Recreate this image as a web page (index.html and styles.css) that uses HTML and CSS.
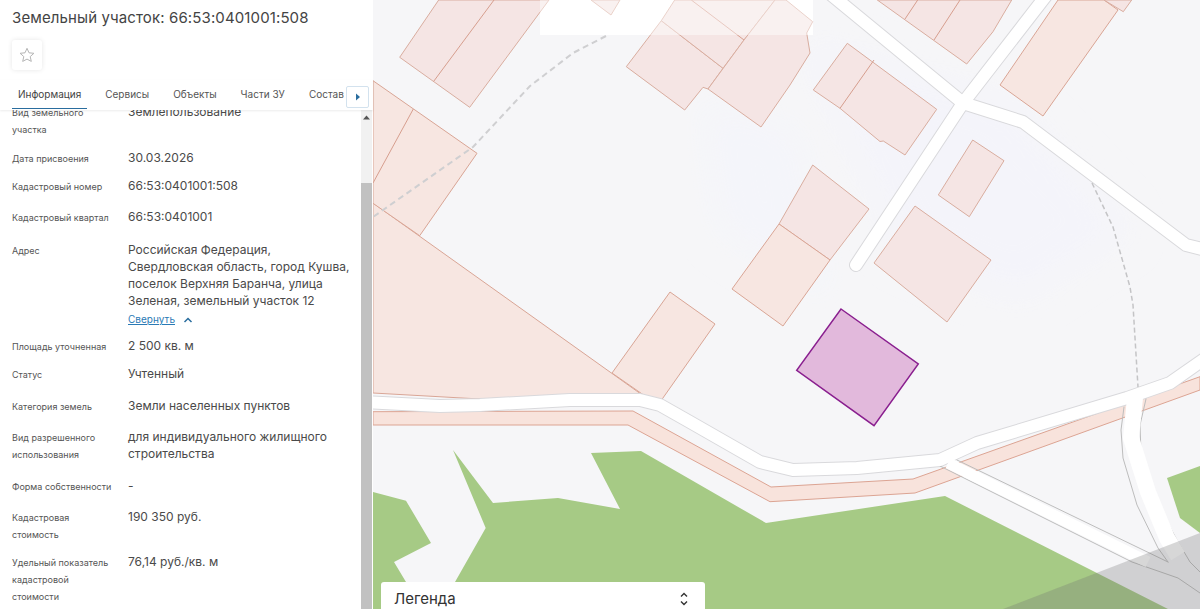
FILE: index.html
```html
<!DOCTYPE html>
<html lang="ru">
<head>
    <meta charset="UTF-8">
    <meta name="viewport" content="width=device-width, initial-scale=1.0">
    <title>Земельный участок</title>
    <link rel="stylesheet" href="styles.css">
</head>
<body>
    <div class="page">
        <aside class="panel">
            <h1 class="title">Земельный участок: 66:53:0401001:508</h1>
            <button class="star-btn" aria-label="Избранное">
                <svg width="16" height="16" viewBox="0 0 16 16">
                    <path d="M8 1.3l2 4.5 4.9.5-3.7 3.3 1.1 4.8L8 12.1l-4.3 2.3 1.1-4.8L1.100 6.300l4.900-.5z" fill="none" stroke="#b5b5b5" stroke-width="1"/>
                </svg>
            </button>
            <nav class="tabs">
                <a class="tab active">Информация</a>
                <a class="tab">Сервисы</a>
                <a class="tab">Объекты</a>
                <a class="tab">Части ЗУ</a>
                <a class="tab">Состав</a>
                <button class="tab-next" aria-label="Далее">
                    <svg width="6" height="8" viewBox="0 0 6 8"><path d="M1 0.500l4 3.500-4 3.500z" fill="#2a6d9e"/></svg>
                </button>
            </nav>
            <div class="content">
                <div class="info">
                    <div class="row gap-m">
                        <div class="label">Вид земельного участка</div>
                        <div class="value">Землепользование</div>
                    </div>
                    <div class="row gap-s">
                        <div class="label">Дата присвоения</div>
                        <div class="value">30.03.2026</div>
                    </div>
                    <div class="row gap-l">
                        <div class="label">Кадастровый номер</div>
                        <div class="value">66:53:0401001:508</div>
                    </div>
                    <div class="row gap-xxl">
                        <div class="label">Кадастровый квартал</div>
                        <div class="value">66:53:0401001</div>
                    </div>
                    <div class="row gap-xs">
                        <div class="label">Адрес</div>
                        <div class="value">
                            Российская Федерация, Свердловская область, город Кушва, поселок Верхняя Баранча, улица Зеленая, земельный участок 12
                            <div class="collapse">
                                <a class="collapse-link">Свернуть</a>
                                <svg width="10" height="6" viewBox="0 0 10 6"><path d="M1.500 5L5 1.500 8.500 5" fill="none" stroke="#2a6d9e" stroke-width="1.500"/></svg>
                            </div>
                        </div>
                    </div>
                    <div class="row gap-s">
                        <div class="label">Площадь уточненная</div>
                        <div class="value">2 500 кв. м</div>
                    </div>
                    <div class="row gap-xl">
                        <div class="label">Статус</div>
                        <div class="value">Учтенный</div>
                    </div>
                    <div class="row gap-l">
                        <div class="label">Категория земель</div>
                        <div class="value">Земли населенных пунктов</div>
                    </div>
                    <div class="row gap-xl">
                        <div class="label">Вид разрешенного использования</div>
                        <div class="value">для индивидуального жилищного строительства</div>
                    </div>
                    <div class="row gap-l">
                        <div class="label">Форма собственности</div>
                        <div class="value">-</div>
                    </div>
                    <div class="row gap-s">
                        <div class="label">Кадастровая стоимость</div>
                        <div class="value">190 350 руб.</div>
                    </div>
                    <div class="row">
                        <div class="label">Удельный показатель кадастровой стоимости</div>
                        <div class="value">76,14 руб./кв. м</div>
                    </div>
                </div>
                <div class="scrollbar">
                    <svg class="scroll-up" width="7" height="5" viewBox="0 0 7 5"><path d="M3.500 0.500L7 4.500H0z" fill="#555"/></svg>
                    <div class="scroll-thumb"></div>
                </div>
            </div>
        </aside>
        <main class="map">
            <svg class="map-svg" viewBox="373 0 827 609" width="827" height="609">
                <defs>
                    <filter id="soft"><feGaussianBlur stdDeviation="18"/></filter>
                </defs>
                <rect x="373" y="0" width="827" height="609" fill="#f6f6f8"/>
                <path d="M800 40L1010 100 1130 230 1020 300 900 250z" fill="#f4f4fa" filter="url(#soft)"/>
                <path d="M700 100L800 130 830 300 720 230z" fill="#f4f5fa" filter="url(#soft)"/>
                <!-- unloaded tile at the top -->
                <rect x="540" y="0" width="273" height="35" fill="#fff"/>

                <!-- green areas -->
                <g fill="#a6ca85">
                    <path d="M453 450L493 503 558 498 620 509 591 453 641 451 766 523 945 496 1168 609H440L455 582 485.700 528z"/>
                    <path d="M373 492L406 500.700 431 543 394 562 406 582 420 609H373z"/>
                    <path d="M1167 478L1200 466V533L1180 518z"/>
                </g>

                <!-- road strip under the main road -->
                <path class="parcel-strip" d="M373 411.700L633 411 771 487 913 479 1200 376.700V390L915 493 770 501.700 628 425H373z"/>

                <!-- big land parcels on the left -->
                <path class="parcel-warm" d="M373 203L646 397.700 570 395 480 399 373 393z"/>
                <path class="parcel-warm" d="M373 80.700L477 153.300 419.700 235.700 373 203.300z"/>
                <path class="divider" d="M413.300 109L373 183"/>
                <path class="parcel-warm" d="M670 292L715 324 658 405 612 373z"/>
                <path class="parcel" d="M438.700 0L399.700 57.300 469.700 107.300 549 0z"/>
                <path class="divider" d="M494 0L433.700 81.300"/>
                <path class="parcel" d="M591 0L611 15 620 0z"/>

                <!-- parcels by the crossing -->
                <path class="parcel" d="M626.300 66.700L661.300 20.700 723 68.300 708 89 703 87.300 684.700 110z"/>
                <path class="parcel" d="M661.300 20.700L674.700 0H775L744 40 723 68.300z"/>
                <path class="divider" d="M691.300 0L744 40"/>
                <path class="parcel" d="M744 40L775 0H786L812.700 21.700 806.700 33 810 53 790 85 761 127 708 89z"/>
                <path class="parcel" d="M813.300 90L847.300 43.300 936.700 109.300 905 155 883.300 141 880 141.500 840 108.300z"/>
                <path class="divider" d="M874 60L840 108.300"/>
                <path class="parcel" d="M877.300 0L966.700 64 993 31.700 1011.700 0z"/>
                <path class="divider" d="M917.700 0L905 19M960 0L934 40"/>
                <path class="parcel-warm" d="M1058 0L1000 85 1043 116 1118 10 1104 0z"/>
                <path class="parcel" d="M1104 0L1123.300 11.700 1131.700 0z"/>
                <path class="parcel" d="M972.700 140L1004 160.700 969.300 216.700 938.300 195z"/>
                <path class="parcel" d="M915 206L991 260 947 322 874 263z"/>
                <path class="parcel" d="M812.700 165L869 209 830 260 779 224z"/>
                <path class="parcel-warm" d="M779 224L830 260 783 326 732 289z"/>

                <!-- roads -->
                <g fill="none" stroke-linejoin="round" stroke-linecap="round">
                    <path class="road-edge" d="M856 265L963 103 1052 -12M823 -12L963 103 1023 122 1186 245 1210 251"/>
                    <path class="road-edge" d="M363 402L440 406 480 405 570 400 640 400 660 405 690 422 760 462 793 470 857 468 940 460 977 443 1127 398 1170 383 1210 355"/>
                    <path class="road-line" d="M957 460L1168 562M940 466L1132 562 1178 578 1200 593"/>
                    <path class="road-white-s" d="M948 463L1148 562"/>
                    <path class="road-line" d="M1124 407L1121 430 1123 458 1137 505 1158 548 1168 562M1146 399L1140 425 1141 453 1153 495 1177 540 1190 562 1200 572"/>
                    <path class="road-white-m" d="M1135 398L1131 438 1148 492 1167 538 1178 556"/>
                    <path class="road-white" d="M856 265L963 103 1052 -12M823 -12L963 103 1023 122 1186 245 1210 251"/>
                    <path class="road-white" d="M363 402L440 406 480 405 570 400 640 400 660 405 690 422 760 462 793 470 857 468 940 460 977 443 1127 398 1170 383 1210 355"/>
                </g>

                <!-- footpaths -->
                <path class="footpath" d="M606 36L573 53 530 86 473 147 383 210 373 217"/>
                <path class="footpath thin" d="M1092 183L1113 227 1130 287 1133 305 1138 387"/>

                <!-- tile fades what lies on it -->
                <rect x="540" y="0" width="273" height="35" fill="#fff" opacity="0.45"/>

                <!-- grey area -->
                <path d="M1003 609L1200 533V609z" fill="#6e6e6e" opacity="0.28"/>

                <!-- selected parcel -->
                <path d="M841 309L918.300 364 874 425.700 796.700 370.300z" fill="#e2b9dc" stroke="#8a1f8f" stroke-width="1.500"/>
            </svg>
            <div class="legend">
                <span>Легенда</span>
                <svg width="10" height="16" viewBox="0 0 10 16">
                    <path d="M2 5.500L5 2.500 8 5.500M2 10.500L5 13.500 8 10.500" fill="none" stroke="#333" stroke-width="1.400"/>
                </svg>
            </div>
        </main>
    </div>
</body>
</html>
```

FILE: styles.css
```css
html, body {
    margin: 0;
    padding: 0;
    height: 100%;
    overflow: hidden;
}
body {
    font-family: Inter, "Liberation Sans", sans-serif;
    color: #4a4a4a;
    background-color: white;
}
.page {
    display: flex;
    height: 609px;
}
.panel {
    width: 373px;
    flex-shrink: 0;
    display: flex;
    flex-direction: column;
    background-color: white;
}
.title {
    margin: 0;
    padding: 8px 12px 0;
    font-size: 15px;
    line-height: 19px;
    font-weight: 400;
    letter-spacing: 0.12px;
    color: #444;
}
.star-btn {
    width: 30px;
    height: 30px;
    margin: 13px 0 0 12px;
    padding: 0;
    display: flex;
    align-items: center;
    justify-content: center;
    background-color: white;
    border: none;
    border-radius: 3px;
    box-shadow: 0 0 5px rgba(0,0,0,0.1);
}
.tabs {
    position: relative;
    display: flex;
    gap: 24px;
    height: 28px;
    margin-top: 10px;
    padding: 0 0 2px 18px;
    align-items: center;
    box-shadow: 0 1px 2px rgba(0,0,0,0.08);
    z-index: 1;
    overflow: hidden;
}
.tab {
    font-size: 10px;
    color: #555;
    white-space: nowrap;
}
.tab.active {
    position: relative;
    color: #444;
}
.tab.active::after {
    content: "";
    position: absolute;
    left: -6px;
    right: -6px;
    bottom: -9px;
    height: 1.500px;
    background-color: #2a6d9e;
}
.tab-next {
    position: absolute;
    left: 346px;
    top: 6px;
    width: 23px;
    height: 22px;
    padding: 0;
    display: flex;
    align-items: center;
    justify-content: center;
    background-color: white;
    border: 1px solid #d3e2ee;
    border-radius: 2px;
}
.content {
    flex: 1;
    display: flex;
    min-height: 0;
    overflow: hidden;
}
.info {
    flex: 1;
    margin-top: -6px;
    padding: 0 8px 0 12px;
}
.row {
    display: flex;
}
.gap-xs {
    margin-bottom: 10px;
}
.gap-s {
    margin-bottom: 11px;
}
.gap-m {
    margin-bottom: 12px;
}
.gap-l {
    margin-bottom: 14px;
}
.gap-xl {
    margin-bottom: 15px;
}
.gap-xxl {
    margin-bottom: 16px;
}
.label {
    width: 104px;
    margin-right: 12px;
    flex-shrink: 0;
    font-size: 9px;
    line-height: 17px;
    color: #555;
}
.value {
    flex: 1;
    margin-top: -1px;
    font-size: 12px;
    line-height: 17px;
    color: #4a4a4a;
}
.collapse {
    display: flex;
    align-items: center;
    gap: 8px;
    margin-top: 2px;
    height: 17px;
}
.collapse-link {
    font-size: 10px;
    color: #2a7ab5;
    text-decoration: underline;
}
.scrollbar {
    width: 11px;
    margin-right: 1px;
    flex-shrink: 0;
    display: flex;
    flex-direction: column;
    align-items: center;
    background-color: #f1f1f1;
}
.scroll-up {
    margin-top: 5px;
}
.scroll-thumb {
    width: 100%;
    flex: 1;
    margin-top: 63px;
    background-color: #c1c1c1;
}
.map {
    position: relative;
    flex: 1;
    overflow: hidden;
}
.map-svg {
    display: block;
}
.parcel, .parcel-warm, .parcel-strip {
    stroke-width: 1;
}
.parcel {
    fill: #f5e5e4;
    stroke: #d9ad9f;
}
.parcel-warm {
    fill: #f7e6e1;
    stroke: #d9a595;
}
.parcel-strip {
    fill: #f8e3dc;
    stroke: #dca493;
}
.divider {
    fill: none;
    stroke: #d69e8e;
    stroke-width: 1;
}
.road-edge {
    stroke: #d9d9dc;
    stroke-width: 14;
}
.road-white {
    stroke: white;
    stroke-width: 12;
}
.road-line {
    stroke: #bdbdbd;
    stroke-width: 1;
}
.road-white-s {
    stroke: white;
    stroke-width: 11;
    stroke-linecap: butt;
}
.road-white-m {
    stroke: white;
    stroke-width: 16;
    stroke-linecap: butt;
}
.footpath {
    fill: none;
    stroke: #cfcfd1;
    stroke-width: 2;
    stroke-dasharray: 6 4;
}
.footpath.thin {
    stroke: #c4c4c6;
    stroke-width: 1.500;
    stroke-dasharray: 5 3;
}
.legend {
    position: absolute;
    left: 8px;
    bottom: 0;
    box-sizing: border-box;
    width: 324px;
    height: 27px;
    padding: 6px 16px 0 13px;
    display: flex;
    align-items: center;
    justify-content: space-between;
    background-color: white;
    border-radius: 3px 3px 0 0;
    font-size: 15px;
    color: #333;
}
```
